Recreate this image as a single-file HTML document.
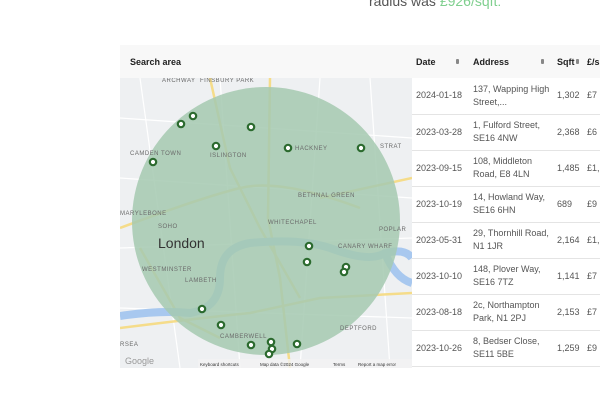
<!DOCTYPE html>
<html><head><meta charset="utf-8"><style>
*{margin:0;padding:0;box-sizing:border-box}
body{width:600px;height:400px;background:#fff;font-family:"Liberation Sans",sans-serif;position:relative;overflow:hidden;color:#333}
.top{position:absolute;left:369px;top:-7px;font-size:14px;color:#555}
.top span{color:#7fcf8e}
.card{position:absolute;left:120px;top:45px;width:480px;height:323px}
.sh{position:absolute;left:0;top:0;width:292px;height:33px;background:#f8f8f8;font-size:9px;font-weight:bold;padding:12px 0 0 10px;color:#222}
.map{position:absolute;left:0;top:33px}
table{position:absolute;left:292px;top:0;border-collapse:collapse;font-size:9px;color:#555;width:200px}
th{background:#f8f8f8;height:33px;text-align:left;font-weight:bold;color:#222;font-size:9px;position:relative}
td{height:36px;border-bottom:1px solid #e4e4e4;line-height:13px;vertical-align:middle}
.c1{width:57px;padding-left:4px}.c2{width:84px;padding-left:4px}.c3{width:33px;padding-left:4px}.c4{padding-left:1px}
.s{position:absolute;top:14px;width:3px;height:5px;background:#888;border-radius:1px}
</style></head><body>
<div class="top">radius was <span>£926/sqft:</span></div>
<div class="card">
<div class="sh">Search area</div>
<svg class="map" width="292" height="290" viewBox="0 0 292 290">
<rect width="292" height="290" fill="#eef0f2"/>
<g stroke="#fff" stroke-width="1.2" fill="none">
<path d="M0 40 L292 60 M0 100 L292 120 M0 170 L292 160 M20 0 L60 290 M100 0 L120 290 M200 0 L180 290 M250 0 L270 290 M0 230 L292 240"/>
</g>
<g stroke="#f5dc8a" stroke-width="2.5" fill="none">
<path d="M0 150 Q80 120 120 110 T240 130"/>
<path d="M90 0 L110 90 L140 150 L180 220"/>
<path d="M150 0 L148 140 L160 200 L170 290"/>
<path d="M0 250 Q80 240 130 235 L200 220 L292 215"/>
<path d="M20 170 L60 240 L100 260"/>
<path d="M200 120 L292 100"/>
</g>
<path d="M0 238 Q40 232 70 235 Q100 230 100 200 Q100 170 130 165 Q180 160 210 170 Q250 185 265 175 Q285 170 292 180" stroke="#a8c8ef" stroke-width="8" fill="none"/>
<path d="M265 175 Q275 200 292 205" stroke="#a8c8ef" stroke-width="8" fill="none"/>
<circle cx="146" cy="143" r="134" fill="#a4c9b0" fill-opacity="0.85"/>
<g font-family="Liberation Sans,sans-serif" fill="#6a6a6a" font-size="6" letter-spacing=".5">
<text x="10" y="77">CAMDEN TOWN</text><text x="90" y="79">ISLINGTON</text>
<text x="175" y="72">HACKNEY</text><text x="178" y="119">BETHNAL GREEN</text>
<text x="0" y="137">MARYLEBONE</text><text x="38" y="150">SOHO</text>
<text x="148" y="146">WHITECHAPEL</text><text x="259" y="153">POPLAR</text>
<text x="218" y="170">CANARY WHARF</text><text x="22" y="193">WESTMINSTER</text>
<text x="65" y="204">LAMBETH</text><text x="220" y="252">DEPTFORD</text>
<text x="100" y="260">CAMBERWELL</text><text x="0" y="268">RSEA</text>
<text x="260" y="70">STRAT</text><text x="42" y="4">ARCHWAY</text><text x="80" y="4">FINSBURY PARK</text>
</g>
<text x="38" y="170" font-family="Liberation Sans,sans-serif" font-size="14" fill="#333">London</text>
<g fill="#fff" stroke="#2b6a2e" stroke-width="2.2">
<circle cx="61" cy="46" r="3.2"/><circle cx="73" cy="38" r="3.2"/><circle cx="131" cy="49" r="3.2"/><circle cx="96" cy="68" r="3.2"/><circle cx="168" cy="70" r="3.2"/><circle cx="241" cy="70" r="3.2"/><circle cx="33" cy="84" r="3.2"/><circle cx="189" cy="168" r="3.2"/><circle cx="187" cy="184" r="3.2"/><circle cx="226" cy="189" r="3.2"/><circle cx="224" cy="194" r="3.2"/><circle cx="82" cy="231" r="3.2"/><circle cx="101" cy="247" r="3.2"/><circle cx="131" cy="267" r="3.2"/><circle cx="151" cy="264" r="3.2"/><circle cx="152" cy="271" r="3.2"/><circle cx="177" cy="266" r="3.2"/><circle cx="149" cy="276" r="3.2"/>
</g>
<text x="5" y="286" font-family="Liberation Sans,sans-serif" font-size="9" fill="#999">Google</text>
<g font-family="Liberation Sans,sans-serif" font-size="4.5" fill="#333"><rect x="78" y="281" width="214" height="9" fill="#f2f2f2" opacity=".8"/><text x="80" y="288">Keyboard shortcuts</text><text x="140" y="288">Map data ©2024 Google</text><text x="213" y="288">Terms</text><text x="238" y="288">Report a map error</text></g>
</svg>
<table>
<tr><th class="c1">Date<i class="s" style="left:44px"></i></th><th class="c2">Address<i class="s" style="left:72px"></i></th><th class="c3">Sqft<i class="s" style="left:23px"></i></th><th class="c4">£/s</th></tr>
<tr><td class="c1">2024-01-18</td><td class="c2">137, Wapping High Street,...</td><td class="c3">1,302</td><td class="c4">£7</td></tr>
<tr><td class="c1">2023-03-28</td><td class="c2">1, Fulford Street, SE16 4NW</td><td class="c3">2,368</td><td class="c4">£6</td></tr>
<tr><td class="c1">2023-09-15</td><td class="c2">108, Middleton Road, E8 4LN</td><td class="c3">1,485</td><td class="c4">£1,</td></tr>
<tr><td class="c1">2023-10-19</td><td class="c2">14, Howland Way, SE16 6HN</td><td class="c3">689</td><td class="c4">£9</td></tr>
<tr><td class="c1">2023-05-31</td><td class="c2">29, Thornhill Road, N1 1JR</td><td class="c3">2,164</td><td class="c4">£1,</td></tr>
<tr><td class="c1">2023-10-10</td><td class="c2">148, Plover Way, SE16 7TZ</td><td class="c3">1,141</td><td class="c4">£7</td></tr>
<tr><td class="c1">2023-08-18</td><td class="c2">2c, Northampton Park, N1 2PJ</td><td class="c3">2,153</td><td class="c4">£7</td></tr>
<tr><td class="c1">2023-10-26</td><td class="c2">8, Bedser Close, SE11 5BE</td><td class="c3">1,259</td><td class="c4">£9</td></tr>
</table>
</div>
</body></html>
